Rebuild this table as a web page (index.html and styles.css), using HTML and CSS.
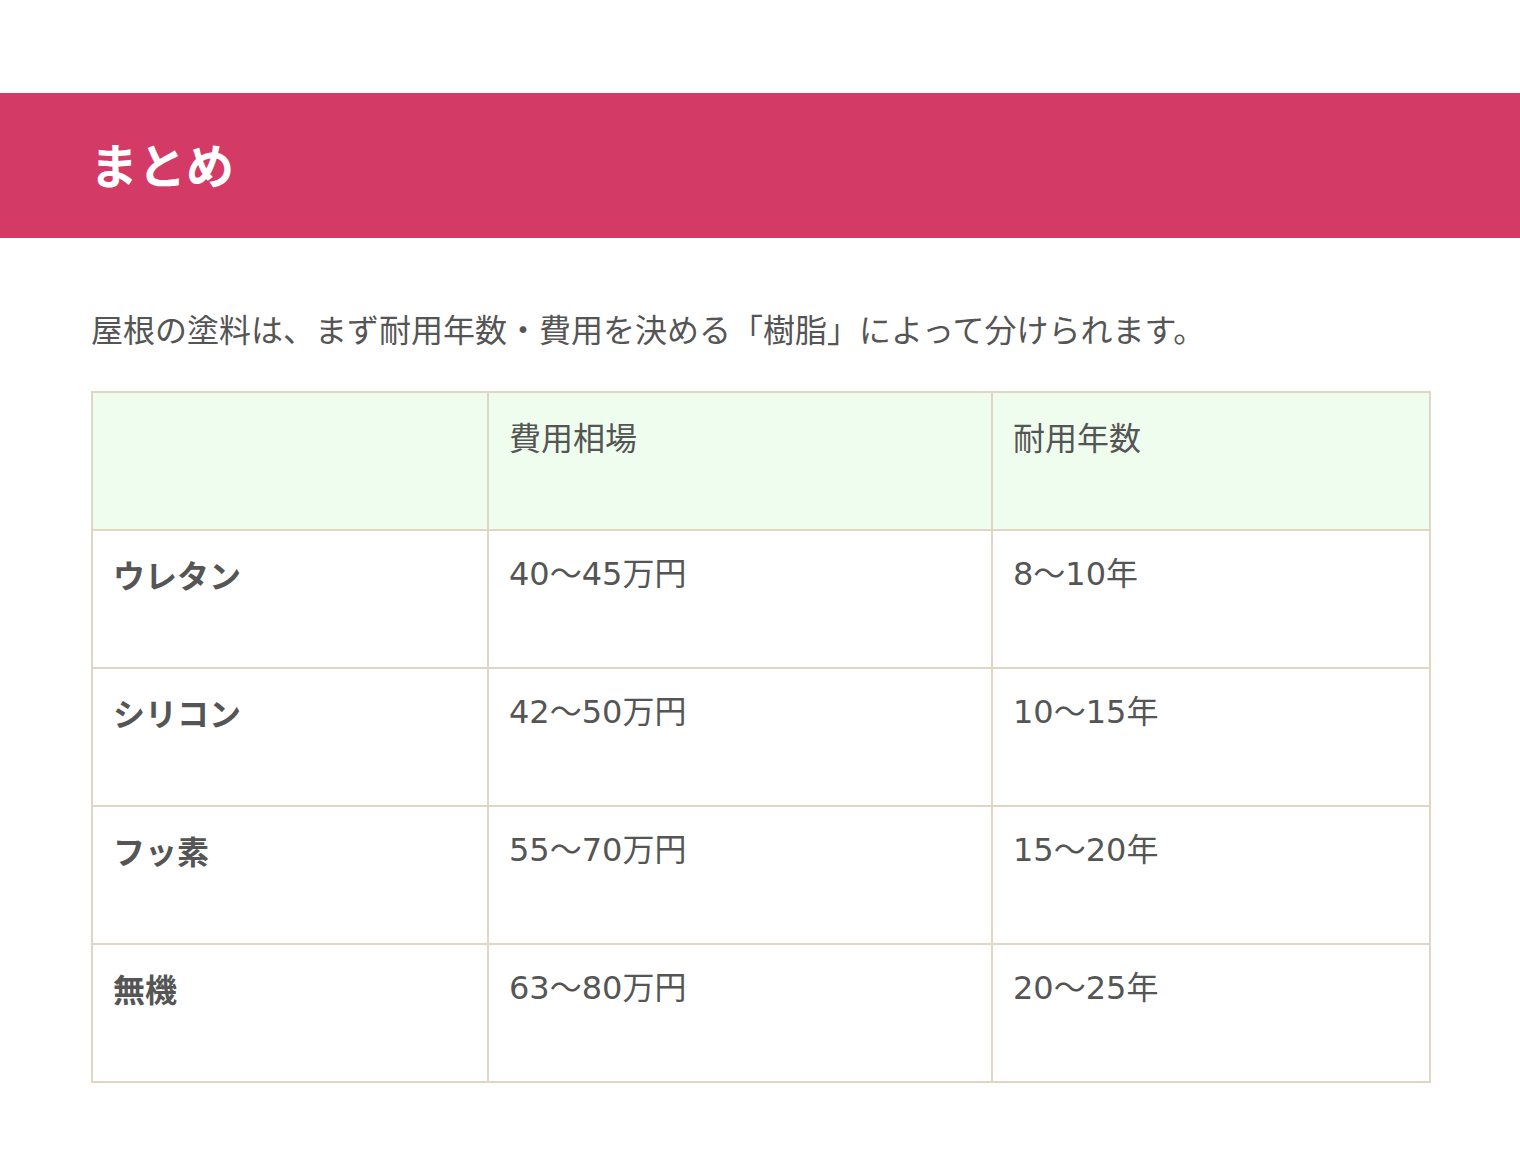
FILE: index.html
```html
<!DOCTYPE html>
<html lang="ja">
<head>
<meta charset="utf-8">
<title>まとめ</title>
<link rel="stylesheet" href="styles.css">
</head>
<body>
<h2 class="band">まとめ</h2>
<div class="content">
  <p class="lead">屋根の塗料は、まず耐用年数・費用を決める「樹脂」によって分けられます。</p>
  <table class="tbl">
    <colgroup>
      <col class="c1"><col class="c2"><col class="c3">
    </colgroup>
    <thead>
      <tr class="head"><th></th><th>費用相場</th><th>耐用年数</th></tr>
    </thead>
    <tbody>
      <tr><th>ウレタン</th><td>40〜45万円</td><td>8〜10年</td></tr>
      <tr><th>シリコン</th><td>42〜50万円</td><td>10〜15年</td></tr>
      <tr><th>フッ素</th><td>55〜70万円</td><td>15〜20年</td></tr>
      <tr><th>無機</th><td>63〜80万円</td><td>20〜25年</td></tr>
    </tbody>
  </table>
</div>
</body>
</html>
```
FILE: styles.css
```css
html, body {
  margin: 0;
  padding: 0;
  background: #fff;
}
body {
  font-family: "Noto Sans CJK JP", "Noto Sans", sans-serif;
  color: #555;
}
.band {
  margin: 93px 0 0;
  height: 145px;
  background: #d43a66;
  color: #fff;
  font-size: 48px;
  font-weight: 700;
  display: flex;
  align-items: center;
  padding: 0 0 6px 90px;
  box-sizing: border-box;
}
.content {
  padding: 0 91px;
}
.lead {
  margin: 61px 0 34px;
  font-size: 32px;
  line-height: 58px;
}
.tbl {
  width: 1338px;
  border-collapse: collapse;
  table-layout: fixed;
  font-size: 32px;
  line-height: 58px;
}
.c1 { width: 396px; }
.c2 { width: 504px; }
.c3 { width: 438px; }
.tbl th, .tbl td {
  border: 2px solid #e0d6c6;
  height: 138px;
  box-sizing: border-box;
  padding: 14px 20px;
  vertical-align: top;
  text-align: left;
  font-weight: 400;
}
.tbl td {
  font-family: "DejaVu Sans", "Noto Sans CJK JP", sans-serif;
}
.tbl tbody th {
  font-weight: 600;
}
.head th {
  background: #effdee;
}
```
